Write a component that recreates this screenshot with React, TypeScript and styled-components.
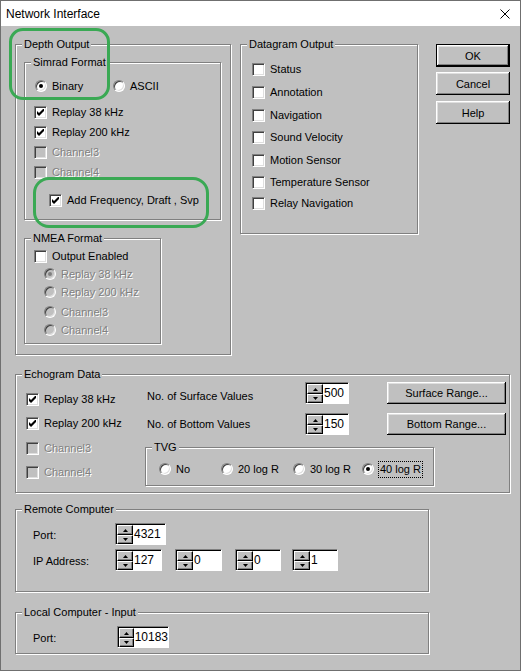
import React from "react";
import styled, { createGlobalStyle } from "styled-components";

const GlobalStyle = createGlobalStyle`
  body {
    margin: 0;
    background: #fff;
  }
  * {
    box-sizing: border-box;
  }
`;

const Window = styled.div`
  position: relative;
  width: 521px;
  height: 671px;
  border: 1px solid #6f6f6f;
  background: #c0c0c0;
  display: flex;
  flex-direction: column;
  font-family: "Liberation Sans", Arial, sans-serif;
  font-size: 11px;
  color: #000;
`;

const TitleBar = styled.div`
  height: 25px;
  flex-shrink: 0;
  background: #fff;
  display: flex;
  align-items: center;
  justify-content: space-between;
  padding: 0 10px 0 5px;
  font-size: 12px;
`;

const Client = styled.div`
  flex: 1;
  padding: 18px 0 0 14px;
  display: flex;
  flex-direction: column;
  align-items: flex-start;
`;

const TopRow = styled.div`
  display: flex;
  align-items: flex-start;
`;

const Group = styled.div<{ $w: number; $h: number; $pad: string; $mt?: number; $ml?: number; $flex?: boolean }>`
  position: relative;
  flex-shrink: 0;
  width: ${(p) => p.$w}px;
  height: ${(p) => p.$h}px;
  margin-top: ${(p) => p.$mt ?? 0}px;
  margin-left: ${(p) => p.$ml ?? 0}px;
  padding: ${(p) => p.$pad};
  border: 1px solid #808080;
  box-shadow: inset 1px 1px 0 #fff, 1px 1px 0 #fff;
  display: ${(p) => (p.$flex ? "flex" : "block")};
`;

const Legend = styled.span`
  position: absolute;
  top: -8px;
  left: 6px;
  padding: 0 2px;
  line-height: 14px;
  background: #c0c0c0;
  white-space: nowrap;
`;

const Row = styled.div<{ $mt?: number; $ml?: number; $h?: number }>`
  display: flex;
  align-items: center;
  height: ${(p) => p.$h ?? 16}px;
  margin-top: ${(p) => p.$mt ?? 0}px;
  margin-left: ${(p) => p.$ml ?? 0}px;
  white-space: nowrap;
`;

const Option = styled.label<{ $w?: number }>`
  display: flex;
  align-items: center;
  gap: 5px;
  width: ${(p) => (p.$w ? `${p.$w}px` : "auto")};
  flex-shrink: 0;
`;

const Caption = styled.span<{ $disabled?: boolean; $focus?: boolean }>`
  color: ${(p) => (p.$disabled ? "#808080" : "#000")};
  text-shadow: ${(p) => (p.$disabled ? "1px 1px 0 #fff" : "none")};
  outline: ${(p) => (p.$focus ? "1px dotted #000" : "none")};
  padding: ${(p) => (p.$focus ? "1px 1px" : "0")};
  line-height: 13px;
`;

const CheckBox = styled.span<{ $disabled?: boolean }>`
  width: 13px;
  height: 13px;
  flex-shrink: 0;
  display: flex;
  align-items: center;
  justify-content: center;
  background: ${(p) => (p.$disabled ? "#c0c0c0" : "#fff")};
  border: 1px solid;
  border-color: #808080 #fff #fff #808080;
  box-shadow: inset 1px 1px 0 #404040, inset -1px -1px 0 #dfdfdf;
`;

const RadioDot = styled.span<{ $disabled?: boolean }>`
  width: 12px;
  height: 12px;
  flex-shrink: 0;
  border-radius: 50%;
  display: flex;
  align-items: center;
  justify-content: center;
  background: ${(p) => (p.$disabled ? "#c0c0c0" : "#fff")};
  border: 1px solid;
  border-color: #808080 #fff #fff #808080;
  box-shadow: inset 1px 1px 0 #404040, inset -1px -1px 0 #dfdfdf;
`;

const Dot = styled.span<{ $disabled?: boolean }>`
  width: 4px;
  height: 4px;
  border-radius: 50%;
  background: ${(p) => (p.$disabled ? "#808080" : "#000")};
`;

const Button = styled.button<{ $w: number; $h: number; $mt?: number; $ml?: number; $default?: boolean }>`
  width: ${(p) => p.$w}px;
  height: ${(p) => p.$h}px;
  margin: ${(p) => `${p.$mt ?? 0}px 0 0 ${p.$ml ?? 0}px`};
  flex-shrink: 0;
  padding: 0;
  font: inherit;
  color: #000;
  background: #c0c0c0;
  border: ${(p) => (p.$default ? "1px solid #000" : "none")};
  box-shadow: inset -1px -1px 0 #000, inset 1px 1px 0 #fff, inset -2px -2px 0 #808080, inset 2px 2px 0 #dfdfdf;
`;

const ButtonColumn = styled.div`
  display: flex;
  flex-direction: column;
  margin-left: 18px;
`;

const SpinBox = styled.div<{ $w: number; $ml?: number }>`
  display: flex;
  width: ${(p) => p.$w}px;
  height: 22px;
  flex-shrink: 0;
  margin-left: ${(p) => p.$ml ?? 0}px;
  background: #fff;
  border: 1px solid;
  border-color: #808080 #fff #fff #808080;
  box-shadow: inset 1px 1px 0 #000;
`;

const SpinButtons = styled.div`
  display: flex;
  flex-direction: column;
  width: 16px;
  margin: 1px 0 0 1px;
`;

const SpinArrow = styled.span<{ $h: number }>`
  height: ${(p) => p.$h}px;
  display: flex;
  align-items: center;
  justify-content: center;
  background: #c0c0c0;
  border: 1px solid;
  border-color: #fff #000 #000 #fff;
  box-shadow: inset -1px -1px 0 #808080;
`;

const SpinValue = styled.span`
  padding: 3px 0 0 1px;
  font-size: 12px;
  line-height: 14px;
`;

const FieldLabel = styled.span<{ $w: number; $dy?: number }>`
  width: ${(p) => p.$w}px;
  flex-shrink: 0;
  padding-top: ${(p) => p.$dy ?? 0}px;
`;

const LeftChecks = styled.div`
  width: 121px;
  flex-shrink: 0;
  margin-top: 9px;
`;

const RightArea = styled.div`
  display: flex;
  flex-direction: column;
`;

const Annotation = styled.div<{ $x: number; $y: number; $w: number; $h: number; $r: number }>`
  position: absolute;
  left: ${(p) => p.$x}px;
  top: ${(p) => p.$y}px;
  width: ${(p) => p.$w}px;
  height: ${(p) => p.$h}px;
  border: 3px solid #3aa954;
  border-radius: ${(p) => p.$r}px;
  pointer-events: none;
`;

function Check({ label, checked, disabled }: { label: string; checked?: boolean; disabled?: boolean }) {
  return (
    <Option>
      <CheckBox $disabled={disabled}>
        {checked && (
          <svg width="7" height="7" viewBox="0 0 7 7">
            <polygon points="0,2 2,4 7,-1 7,2 2,7 0,5" fill={disabled ? "#808080" : "#000"} />
          </svg>
        )}
      </CheckBox>
      <Caption $disabled={disabled}>{label}</Caption>
    </Option>
  );
}

function Radio({
  label,
  checked,
  disabled,
  width,
  focus,
}: {
  label: string;
  checked?: boolean;
  disabled?: boolean;
  width?: number;
  focus?: boolean;
}) {
  return (
    <Option $w={width}>
      <RadioDot $disabled={disabled}>{checked && <Dot $disabled={disabled} />}</RadioDot>
      <Caption $disabled={disabled} $focus={focus}>
        {label}
      </Caption>
    </Option>
  );
}

function Spinner({ value, width, ml }: { value: string; width: number; ml?: number }) {
  return (
    <SpinBox $w={width} $ml={ml}>
      <SpinButtons>
        <SpinArrow $h={10}>
          <svg width="5" height="3" viewBox="0 0 5 3">
            <polygon points="2.5,0 5,3 0,3" fill="#000" />
          </svg>
        </SpinArrow>
        <SpinArrow $h={9}>
          <svg width="5" height="3" viewBox="0 0 5 3">
            <polygon points="0,0 5,0 2.5,3" fill="#000" />
          </svg>
        </SpinArrow>
      </SpinButtons>
      <SpinValue>{value}</SpinValue>
    </SpinBox>
  );
}

const datagram = [
  { label: "Status", mt: 0 },
  { label: "Annotation", mt: 7 },
  { label: "Navigation", mt: 7 },
  { label: "Sound Velocity", mt: 6 },
  { label: "Motion Sensor", mt: 7 },
  { label: "Temperature Sensor", mt: 6 },
  { label: "Relay Navigation", mt: 5 },
];

export default function App() {
  return (
    <>
      <GlobalStyle />
      <Window>
        <TitleBar>
          <span>Network Interface</span>
          <svg width="10" height="10" viewBox="0 0 10 10">
            <path d="M0.5 0.5 L9.5 9.5 M9.5 0.5 L0.5 9.5" stroke="#000" strokeWidth="1" />
          </svg>
        </TitleBar>

        <Client>
          <TopRow>
            <Group $w={216} $h={311} $pad="17px 0 0 8px">
              <Legend>Depth Output</Legend>
              <Group $w={197} $h={158} $pad="15px 0 0 9px">
                <Legend>Simrad Format</Legend>
                <Row $ml={1}>
                  <Radio label="Binary" checked width={78} />
                  <Radio label="ASCII" />
                </Row>
                <Row $mt={10}>
                  <Check label="Replay 38 kHz" checked />
                </Row>
                <Row $mt={4}>
                  <Check label="Replay 200 kHz" checked />
                </Row>
                <Row $mt={4}>
                  <Check label="Channel3" disabled />
                </Row>
                <Row $mt={4}>
                  <Check label="Channel4" disabled />
                </Row>
                <Row $mt={12} $ml={15}>
                  <Check label="Add Frequency, Draft , Svp" checked />
                </Row>
              </Group>

              <Group $w={137} $h={106} $mt={18} $pad="9px 0 0 9px">
                <Legend>NMEA Format</Legend>
                <Row>
                  <Check label="Output Enabled" />
                </Row>
                <Row $mt={2} $ml={10}>
                  <Radio label="Replay 38 kHz" checked disabled />
                </Row>
                <Row $mt={2} $ml={10}>
                  <Radio label="Replay 200 kHz" disabled />
                </Row>
                <Row $mt={4} $ml={10}>
                  <Radio label="Channel3" disabled />
                </Row>
                <Row $mt={2} $ml={10}>
                  <Radio label="Channel4" disabled />
                </Row>
              </Group>
            </Group>

            <Group $w={178} $h={190} $ml={9} $pad="16px 0 0 11px">
              <Legend>Datagram Output</Legend>
              {datagram.map((d) => (
                <Row key={d.label} $mt={d.mt}>
                  <Check label={d.label} />
                </Row>
              ))}
            </Group>

            <ButtonColumn>
              <Button $w={74} $h={23} $default>
                OK
              </Button>
              <Button $w={74} $h={23} $mt={5}>
                Cancel
              </Button>
              <Button $w={74} $h={23} $mt={6}>
                Help
              </Button>
            </ButtonColumn>
          </TopRow>

          <Group $w={495} $h={119} $mt={19} $pad="7px 0 0 10px" $flex>
            <Legend>Echogram Data</Legend>
            <LeftChecks>
              <Row>
                <Check label="Replay 38 kHz" checked />
              </Row>
              <Row $mt={8}>
                <Check label="Replay 200 kHz" checked />
              </Row>
              <Row $mt={9}>
                <Check label="Channel3" disabled />
              </Row>
              <Row $mt={8}>
                <Check label="Channel4" disabled />
              </Row>
            </LeftChecks>
            <RightArea>
              <Row $h={22}>
                <FieldLabel $w={158} $dy={6}>
                  No. of Surface Values
                </FieldLabel>
                <Spinner value="500" width={44} />
                <Button $w={119} $h={22} $ml={38}>
                  Surface Range...
                </Button>
              </Row>
              <Row $h={22} $mt={9}>
                <FieldLabel $w={158}>No. of Bottom Values</FieldLabel>
                <Spinner value="150" width={44} />
                <Button $w={119} $h={22} $ml={38}>
                  Bottom Range...
                </Button>
              </Row>
              <Group $w={289} $h={39} $mt={12} $ml={-2} $pad="13px 0 0 13px">
                <Legend>TVG</Legend>
                <Row>
                  <Radio label="No" width={62} />
                  <Radio label="20 log R" width={72} />
                  <Radio label="30 log R" width={69} />
                  <Radio label="40 log R" checked focus />
                </Row>
              </Group>
            </RightArea>
          </Group>

          <Group $w={414} $h={83} $mt={16} $pad="13px 0 0 17px">
            <Legend>Remote Computer</Legend>
            <Row $h={22}>
              <FieldLabel $w={82} $dy={2}>
                Port:
              </FieldLabel>
              <Spinner value="4321" width={51} />
            </Row>
            <Row $h={22} $mt={4}>
              <FieldLabel $w={82} $dy={2}>
                IP Address:
              </FieldLabel>
              <Spinner value="127" width={47} />
              <Spinner value="0" width={47} ml={13} />
              <Spinner value="0" width={46} ml={13} />
              <Spinner value="1" width={46} ml={11} />
            </Row>
          </Group>

          <Group $w={414} $h={42} $mt={20} $pad="13px 0 0 17px">
            <Legend>Local Computer - Input</Legend>
            <Row $h={22}>
              <FieldLabel $w={84} $dy={2}>
                Port:
              </FieldLabel>
              <Spinner value="10183" width={52} />
            </Row>
          </Group>
        </Client>

        <Annotation $x={8} $y={27} $w={101} $h={72} $r={14} />
        <Annotation $x={32} $y={176} $w={176} $h={51} $r={16} />
      </Window>
    </>
  );
}
